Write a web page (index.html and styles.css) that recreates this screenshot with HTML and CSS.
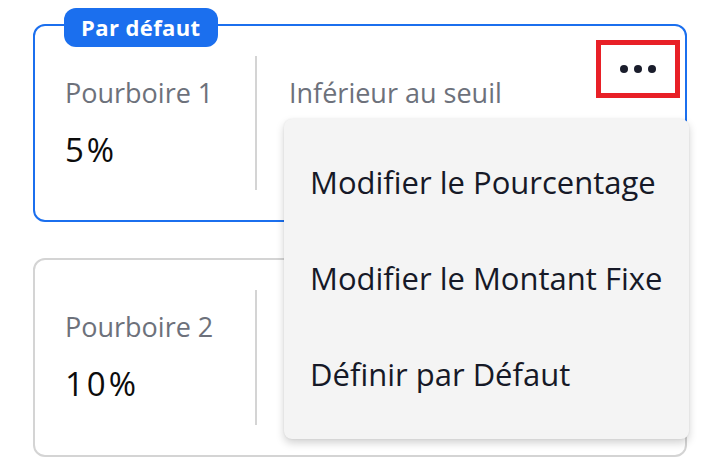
FILE: index.html
```html
<!DOCTYPE html>
<html lang="fr">
<head>
    <meta charset="UTF-8">
    <meta name="viewport" content="width=device-width, initial-scale=1.0">
    <title>Pourboires</title>
    <link rel="stylesheet" href="styles.css">
</head>
<body>

    <div class="tips">
        <div class="tip-card default">
            <span class="badge">Par défaut</span>
            <div class="tip-main">
                <div class="tip-label">Pourboire 1</div>
                <div class="tip-value">5%</div>
            </div>
            <div class="tip-side">
                <div class="tip-label">Inférieur au seuil</div>
            </div>
            <button class="more-btn" aria-label="Options">
                <span class="dot"></span><span class="dot"></span><span class="dot"></span>
            </button>

            <div class="menu">
                <div class="menu-item">Modifier le Pourcentage</div>
                <div class="menu-item">Modifier le Montant Fixe</div>
                <div class="menu-item">Définir par Défaut</div>
            </div>
        </div>

        <div class="tip-card">
            <div class="tip-main">
                <div class="tip-label">Pourboire 2</div>
                <div class="tip-value">10%</div>
            </div>
            <div class="tip-side"></div>
        </div>
    </div>

</body>
</html>
```

FILE: styles.css
```css
body {
    margin: 0;
    background: #fff;
    font-family: "Open Sans", "Noto Sans", sans-serif;
}

.tips {
    display: flex;
    flex-direction: column;
    gap: 36px;
    padding: 24px 0 0 33px;
    width: 654px;
}

.tip-card {
    position: relative;
    display: flex;
    height: 199px;
    box-sizing: border-box;
    padding: 30px 0;
    border: 2px solid #d4d4d4;
    border-radius: 12px;
}
.tip-card.default {
    height: 198px;
    border-color: #1b6fee;
}

.badge {
    position: absolute;
    left: 29px;
    top: -18px;
    height: 39px;
    padding: 0 17px;
    line-height: 39px;
    border-radius: 12px;
    background: #1b6fee;
    color: #fff;
    font-size: 22px;
    font-weight: bold;
    letter-spacing: 0.4px;
}

.tip-main {
    width: 222px;
    padding-left: 30px;
    box-sizing: border-box;
    border-right: 2px solid #d4d4d4;
}
.tip-side {
    padding-left: 32px;
}

.tip-label {
    margin-top: 21px;
    line-height: 32px;
    font-size: 27px;
    color: #6d717b;
}
.tip-value {
    margin-top: 21px;
    line-height: 40px;
    font-size: 33px;
    letter-spacing: 3px;
    color: #0c0c0c;
}

/* bouton trois points, encadré en rouge */
.more-btn {
    position: absolute;
    top: 14px;
    right: 5px;
    width: 84px;
    height: 58px;
    box-sizing: border-box;
    display: flex;
    align-items: center;
    justify-content: center;
    gap: 6px;
    padding: 0;
    background: #fff;
    border: 5px solid #e82027;
    cursor: pointer;
}
.dot {
    width: 8px;
    height: 8px;
    border-radius: 50%;
    background: #1a1d2c;
}

.menu {
    position: absolute;
    left: 249px;
    top: 93px;
    z-index: 2;
    width: 405px;
    box-sizing: border-box;
    padding: 15px 0 17px;
    background: #f4f4f4;
    border-radius: 8px;
    box-shadow: 0 4px 8px rgba(0, 0, 0, 0.18), 0 0 2px rgba(0, 0, 0, 0.08);
}
.menu-item {
    height: 96px;
    line-height: 96px;
    padding-left: 26px;
    font-size: 31px;
    color: #161927;
    cursor: pointer;
}
```
